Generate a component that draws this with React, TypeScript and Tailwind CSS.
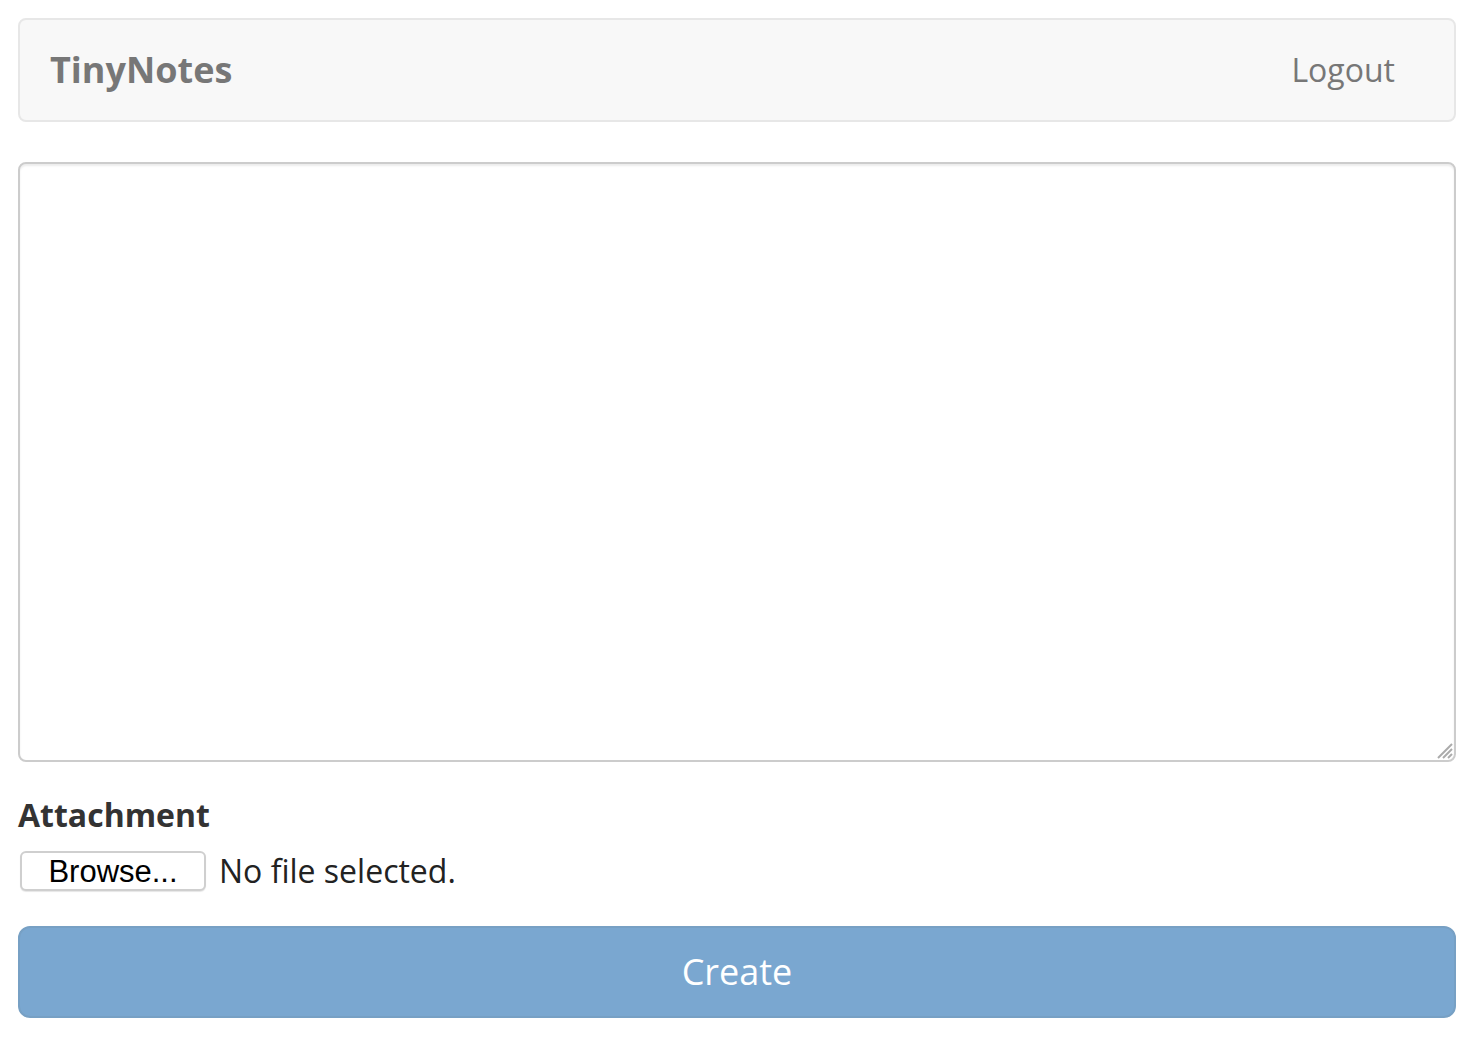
import * as React from 'react';

export default function App() {
  return (
    <div className="min-h-[1040px] bg-white pl-[18px] pr-[26px] pt-[18px] font-['Open_Sans',sans-serif] text-[#333]">
      <nav className="flex h-[104px] items-center justify-between rounded-[8px] border-2 border-[#e7e7e7] bg-[#f8f8f8] pl-[30px] pr-[59px]">
        <span className="text-[36px] font-bold leading-none text-[#777]">TinyNotes</span>
        <span className="text-[32px] leading-none text-[#777]">Logout</span>
      </nav>

      <div className="relative mt-[40px]">
        <textarea className="block h-[600px] w-full resize-none rounded-[8px] border-2 border-[#ccc] shadow-[inset_0_2px_2px_rgba(0,0,0,0.075)] outline-none" />
        <svg className="pointer-events-none absolute bottom-[3px] right-[3px]" width="18" height="18" viewBox="0 0 18 18">
          <g stroke="#aaa" strokeWidth="2">
            <line x1="17" y1="3" x2="3" y2="17" />
            <line x1="17" y1="8" x2="8" y2="17" />
            <line x1="17" y1="13" x2="13" y2="17" />
          </g>
        </svg>
      </div>

      <div className="mt-[33px]">
        <label className="block text-[32px] font-bold leading-[40px] text-[#333]">Attachment</label>
        <div className="mt-[16px] flex items-center">
          <div className="ml-[2px] flex h-[40px] w-[186px] items-center justify-center rounded-[6px] border-2 border-[#cfcfcf] bg-white font-['Liberation_Sans',sans-serif] text-[31px] leading-none text-black shadow-[0_1px_1px_rgba(0,0,0,0.1)]">
            Browse...
          </div>
          <span className="ml-[13px] text-[32px] leading-none text-[#222]">No file selected.</span>
        </div>
      </div>

      <button className="mt-[35px] flex h-[92px] w-full items-center justify-center rounded-[12px] border-2 border-[#77a0c4] bg-[#7aa7d0] text-[36px] text-white">
        Create
      </button>
    </div>
  );
}
